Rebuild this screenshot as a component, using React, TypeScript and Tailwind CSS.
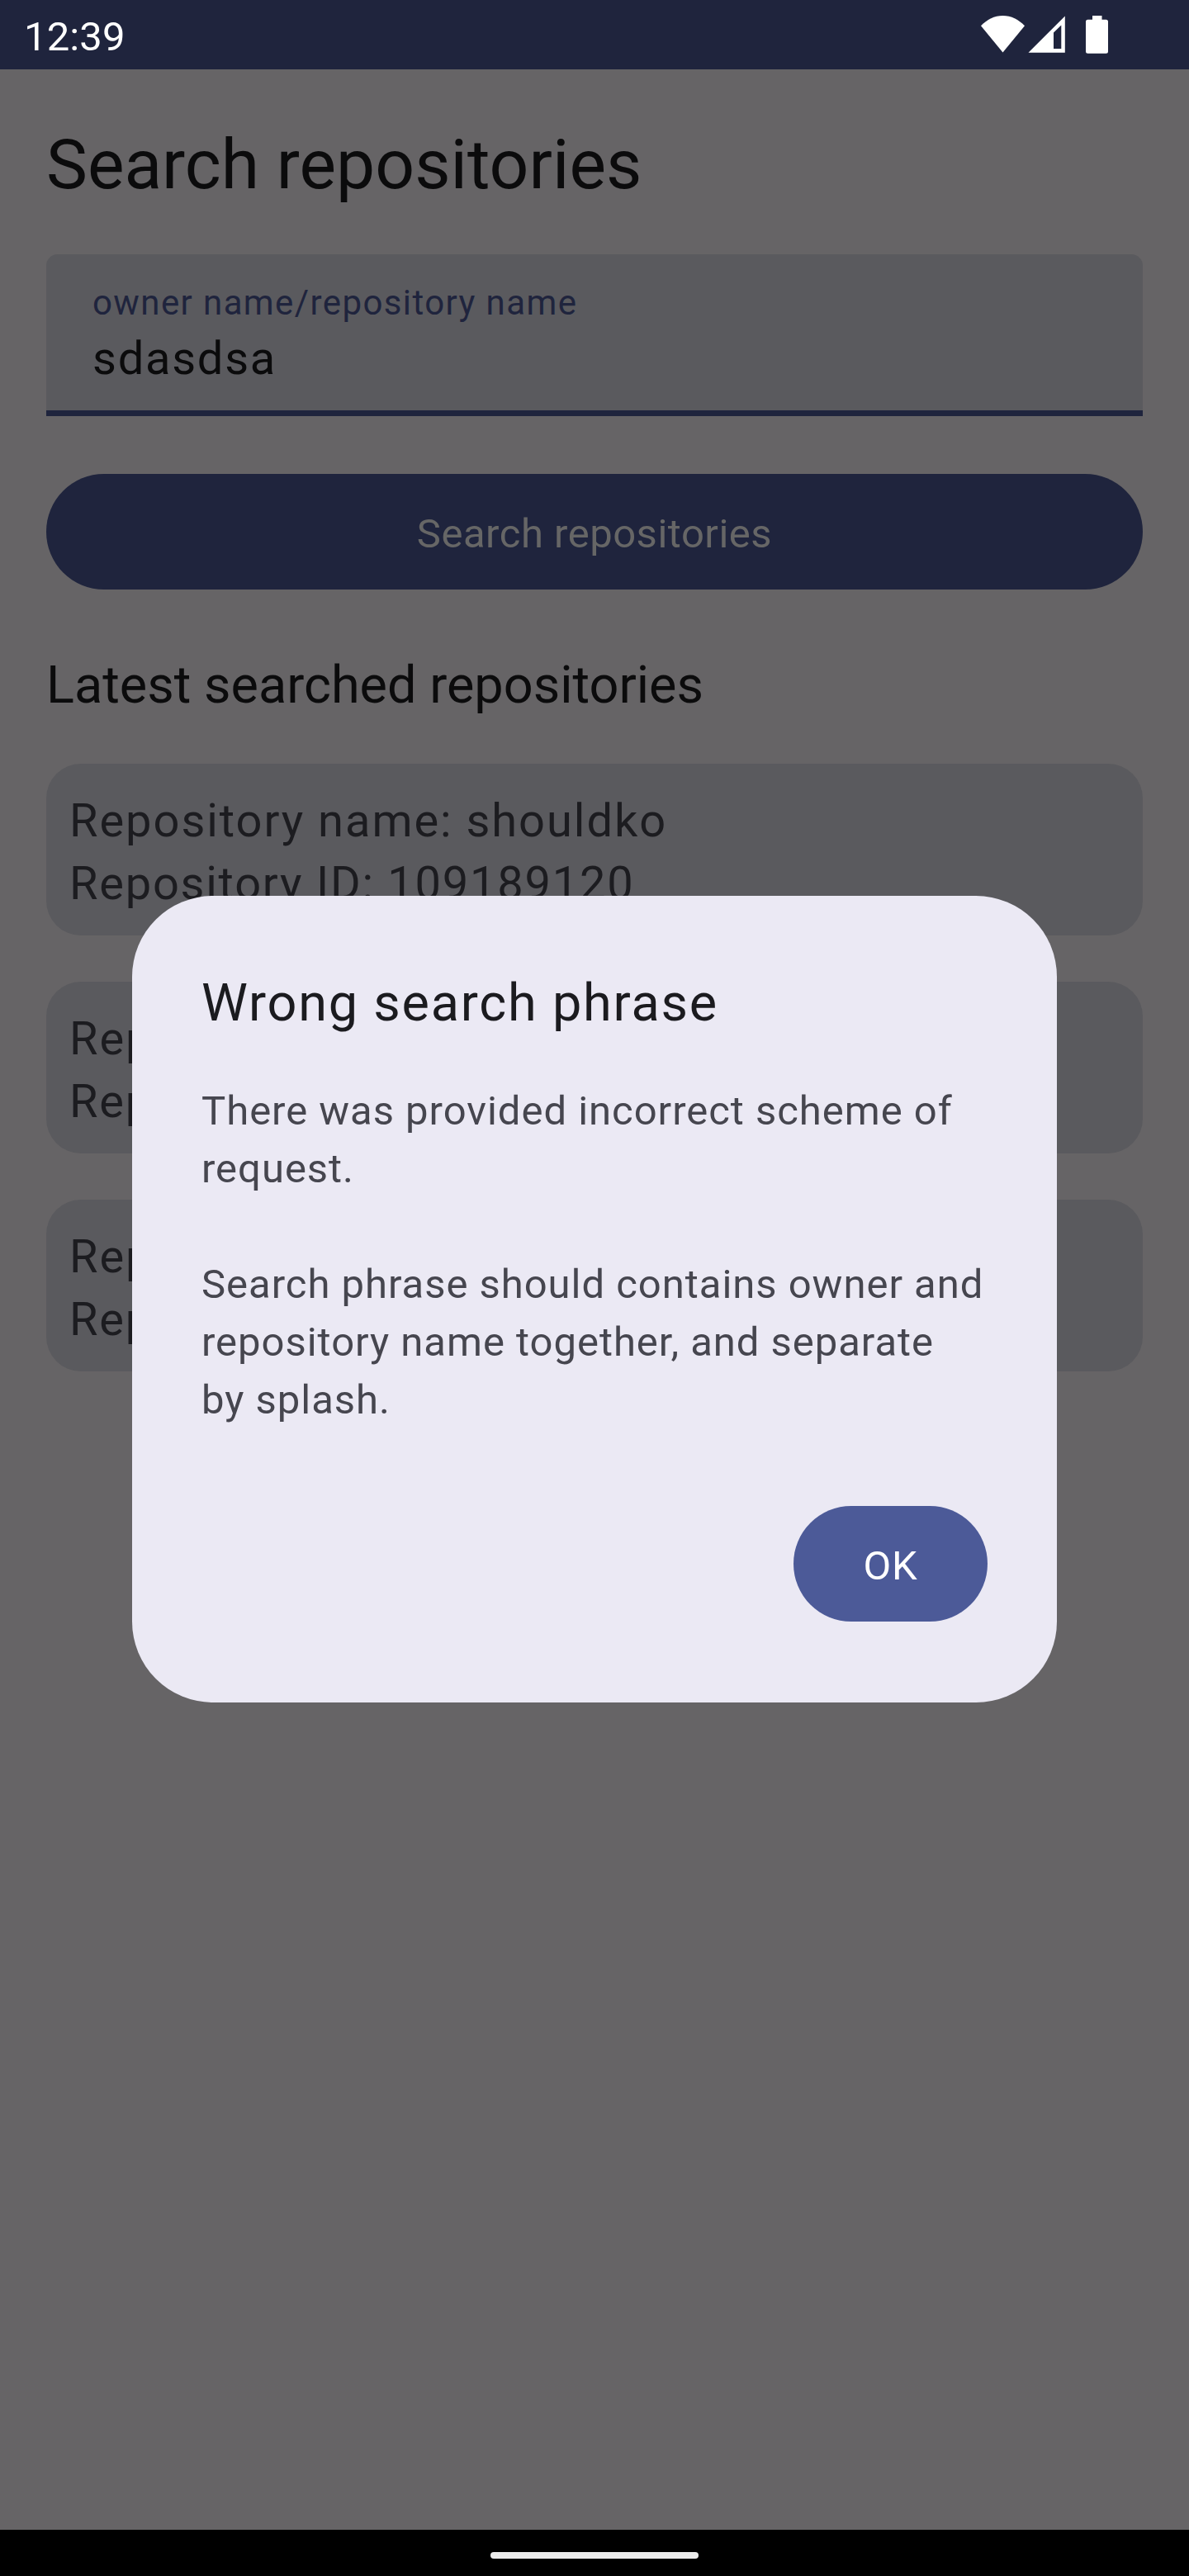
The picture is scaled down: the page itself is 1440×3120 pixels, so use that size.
type Repo = { name: string; id: string };

const repositories: Repo[] = [
  { name: "shouldko", id: "109189120" },
  { name: "shouldko", id: "109189120" },
  { name: "shouldko", id: "109189120" },
];

function StatusBar() {
  return (
    <header className="flex h-[84px] items-center justify-between bg-[#1f243d] pl-[29px] pr-[98px] text-white">
      <span className="pt-[5px] text-[49px] leading-[57px] tracking-[0.1px]">12:39</span>
      <div className="flex h-[84px] items-start pt-[19px]">
        <svg className="h-[45px] w-[53px]" viewBox="0 0 53 45" fill="currentColor">
          <path d="M0 12.3C7.3 4.6 16.5 0 26.5 0S45.7 4.6 53 12.3L26.5 44.5Z" />
        </svg>
        <svg className="ml-[4px] h-[45px] w-[45px]" viewBox="0 0 45 45" fill="currentColor" fillRule="evenodd">
          <path d="M0.5 44.7L44.8 0.4V44.7ZM31 20.5V40H40.3V11.5Z" />
        </svg>
        <svg className="ml-[25px] h-[46px] w-[27px]" viewBox="0 0 27 46" fill="currentColor">
          <path d="M8 0H19.5V4.8H24.5A2.5 2.5 0 0 1 27 7.3V43.2A2.5 2.5 0 0 1 24.5 45.7H2.5A2.5 2.5 0 0 1 0 43.2V7.3A2.5 2.5 0 0 1 2.5 4.8H8Z" />
        </svg>
      </div>
    </header>
  );
}

function RepoCard({ repo }: { repo: Repo }) {
  return (
    <li className="h-[208px] rounded-[42px] bg-[#5a5a5e] px-[28px] pt-[31px] text-[56px] leading-[76px] text-[#1c1c20]">
      <p className="tracking-[1.95px]">Repository name: {repo.name}</p>
      <p className="tracking-[1.75px]">Repository ID: {repo.id}</p>
    </li>
  );
}

function ErrorDialog() {
  return (
    <div className="absolute inset-x-0 top-[84px] bottom-[57px] flex items-center justify-center">
      <div
        role="dialog"
        className="flex h-[977px] w-[1120px] flex-col rounded-[98px] bg-[#ebe9f4] px-[84px] pt-[85px]"
      >
        <h2 className="text-[63px] leading-[89px] tracking-[1.77px] text-[#1b1b1f]">Wrong search phrase</h2>
        <div className="mt-[52px] text-[49px] leading-[70px] tracking-[0.97px] whitespace-nowrap text-[#46464f]">
          <p>
            There was provided incorrect scheme of
            <br />
            request.
          </p>
          <p className="mt-[70px]">
            Search phrase should contains owner and
            <br />
            repository name together, and separate
            <br />
            by splash.
          </p>
        </div>
        <button className="mt-[93px] flex h-[140px] w-[235px] items-center justify-center self-end rounded-full bg-[#4c5a98] pt-[5px] text-[49px] leading-[57px] tracking-[0.875px] text-white">
          OK
        </button>
      </div>
    </div>
  );
}

export default function App() {
  return (
    <div className="relative flex h-[3120px] w-[1440px] flex-col overflow-hidden bg-[#666466] font-['Roboto',sans-serif]">
      <StatusBar />
      <main className="flex-1 px-[56px] pt-[66px] text-[#0b0b0c]">
        <h1 className="text-[84px] leading-[100px]">Search repositories</h1>
        <div className="mt-[58px] h-[196px] rounded-t-[14px] border-b-[7px] border-[#1f243d] bg-[#5a5a5e] px-[56px] pt-[31px]">
          <p className="text-[42px] leading-[56px] tracking-[1.4px] text-[#1f243d]">owner name/repository name</p>
          <p className="mt-[6px] text-[56px] leading-[66px] tracking-[1.75px]">sdasdsa</p>
        </div>
        <button className="mt-[70px] flex h-[140px] w-full items-center justify-center rounded-full bg-[#1f243d] pt-[5px] text-[49px] leading-[57px] tracking-[0.5px] text-[#666666]">
          Search repositories
        </button>
        <h2 className="mt-[79px] text-[63px] leading-[73px]">Latest searched repositories</h2>
        <ul className="mt-[59px] flex flex-col gap-[56px]">
          {repositories.map((repo, i) => (
            <RepoCard key={i} repo={repo} />
          ))}
        </ul>
      </main>
      <footer className="flex h-[56px] justify-center bg-black pt-[27px]">
        <div className="h-[8px] w-[252px] rounded-full bg-[#ececec]" />
      </footer>
      <ErrorDialog />
    </div>
  );
}
